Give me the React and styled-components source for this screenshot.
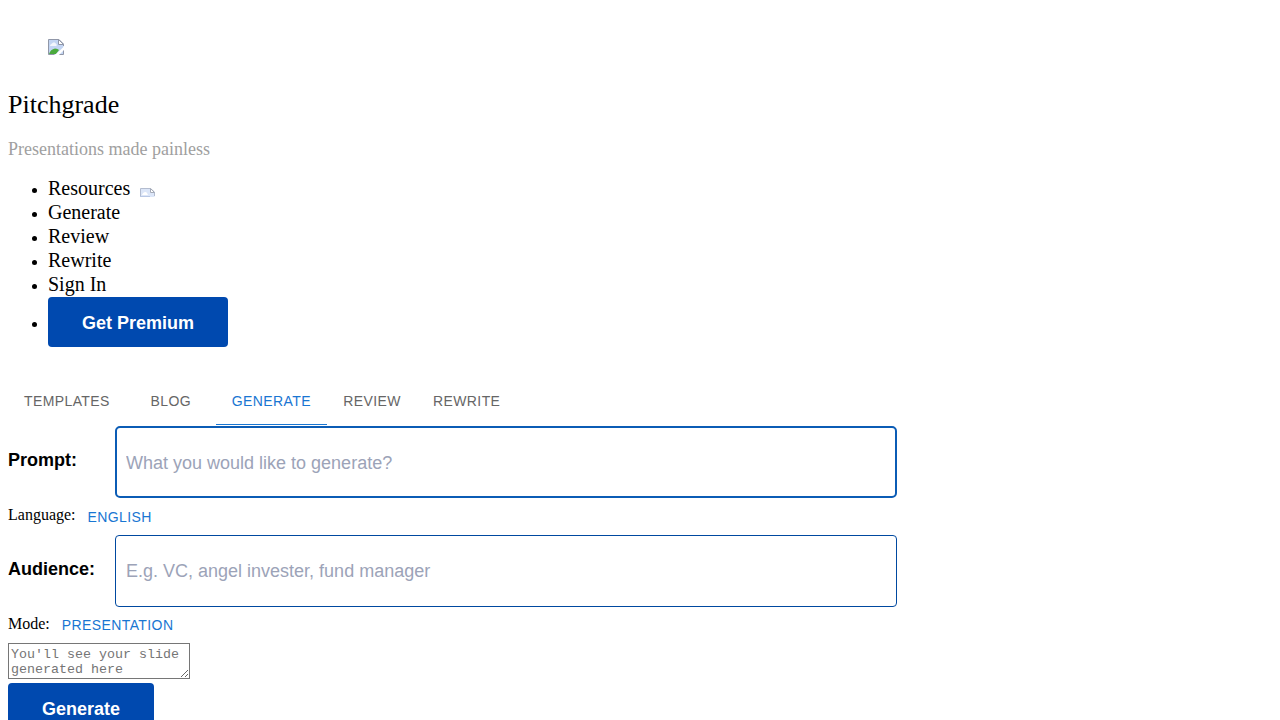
import React from "react";
import styled, { createGlobalStyle, css } from "styled-components";

const serif = '"Liberation Serif", "Times New Roman", serif';
const sans = '"Liberation Sans", Arial, sans-serif';
const mono = '"Liberation Mono", "Courier New", monospace';

const GlobalStyle = createGlobalStyle`
  html {
    scrollbar-width: none;
  }
  body {
    margin: 8px;
    background: #fff;
    color: #000;
    font-family: ${serif};
    font-size: 16px;
  }
`;

const Figure = styled.figure`
  display: flex;
  margin: 0 40px;
  padding: 31px 0 32px;
`;

const Title = styled.p`
  margin: 0;
  font-size: 26px;
  line-height: 36px;
`;

const Subtitle = styled.p`
  margin: 14px 0 16px;
  color: #a0a0a0;
  font-size: 18px;
  line-height: 24px;
`;

const Menu = styled.ul`
  margin: 0;
  padding-left: 40px;
  list-style: disc;
`;

const MenuItem = styled.li`
  padding-top: ${(p) => (p.$flush ? "0" : "1px")};
  line-height: 23px;
`;

const MenuLink = styled.a`
  color: inherit;
  font-size: 20px;
  line-height: 20px;
  text-decoration: none;
`;

const ArrowIcon = styled.svg`
  margin-left: 10px;
  vertical-align: -2px;
`;

const PrimaryButton = styled.button`
  display: block;
  height: 50px;
  padding: 2px 34px 0;
  border: 0;
  border-radius: 4px;
  background: #0049af;
  color: #fff;
  font: bold 18px ${sans};
  cursor: pointer;
`;

const Tabs = styled.nav`
  display: flex;
  margin: 30px 0 1px;
`;

const Tab = styled.a`
  box-sizing: border-box;
  min-width: 90px;
  height: 48px;
  padding: 0 16px;
  border-bottom: 1px solid ${(p) => (p.$active ? "#1976d2" : "transparent")};
  color: ${(p) => (p.$active ? "#1976d2" : "#666")};
  font: 14px/48px ${sans};
  letter-spacing: 0.02857em;
  text-align: center;
  text-decoration: none;
  text-transform: uppercase;
`;

const Field = styled.div`
  display: flex;
  align-items: center;
`;

const FieldLabel = styled.label`
  flex: 0 0 107px;
  padding-bottom: 4px;
  font: bold 18px/24px ${sans};
`;

const TextInput = styled.input`
  box-sizing: border-box;
  flex: 0 1 782px;
  min-width: 0;
  height: 72px;
  padding: 0 10px;
  border: 1px solid #0049a0;
  border-radius: 4px;
  outline: 0;
  background: #fff;
  font: 18px ${sans};
  ${(p) =>
    p.$current &&
    css`
      padding: 2px 9px 0;
      border: 2px solid #0b5cb5;
      border-radius: 5px;
    `}
  &::placeholder {
    color: #9ca3b8;
    opacity: 1;
  }
`;

const Choice = styled.div`
  display: flex;
  align-items: center;
  height: ${(p) => (p.$compact ? "36px" : "37px")};
`;

const ChoiceLabel = styled.label`
  padding-right: 4px;
  padding-bottom: 3px;
`;

const ChoiceButton = styled.button`
  min-width: 64px;
  padding: 0 8px;
  border: 0;
  background: transparent;
  color: #1976d2;
  font: 14px/24px ${sans};
  letter-spacing: 0.02857em;
  text-transform: uppercase;
  cursor: pointer;
`;

const Output = styled.textarea`
  display: block;
  box-sizing: border-box;
  width: 182px;
  height: 36px;
  margin: 0 0 4px;
  padding: 3px 2px 1px;
  border: 1px solid #767676;
  font-family: ${mono};
  line-height: 15px;
  overflow: hidden;
  &::placeholder {
    color: #757575;
  }
`;

function ImageGlyph() {
  return (
    <svg width="16" height="16" viewBox="0 0 16 16" role="img" aria-label="Logo">
      <path d="M0.5 0.5H11L15.5 5V15.5H0.5Z" fill="#c3d5f3" />
      <path d="M2 7C2 5 4 5 4.500 4C6 3 8 4 8 5C9 5 9 7 8 7Z" fill="#f2f6fd" />
      <path d="M1 15C2 12 4 10 7 9.500C9 9.500 10 10.500 11 11L8 15Z" fill="#4aaa3c" />
      <path d="M7 16L16 7.500V11L11 16Z" fill="#fff" />
      <path d="M6.500 15.500H0.500V0.500H11L15.500 5V7M11.500 15.500H15.500V11.500" fill="none" stroke="#9097a8" />
      <path d="M10.500 0.500V5.500H15.500Z" fill="#fff" stroke="#9097a8" />
    </svg>
  );
}

function CaretGlyph() {
  return (
    <ArrowIcon width="15" height="9" viewBox="0 0 15 9" role="img" aria-label="Expand">
      <path d="M0.5 9V0.5H10.500L14.500 4V9Z" fill="#dce6f8" />
      <path d="M2 7C3 4 6 3 7 5L8 7Z" fill="#fff" />
      <path d="M0.500 9V0.500H10.500L14.500 4V8" fill="none" stroke="#b3bccf" />
      <path d="M10.500 0.500V4.500H14.500Z" fill="#fff" stroke="#a5abb8" />
      <path d="M0 8.500H10" stroke="#b9c8e5" />
    </ArrowIcon>
  );
}

const menu = ["Resources", "Generate", "Review", "Rewrite", "Sign In"];
const tabs = ["Templates", "Blog", "Generate", "Review", "Rewrite"];

export default function App() {
  return (
    <>
      <GlobalStyle />
      <header>
        <Figure>
          <ImageGlyph />
        </Figure>
        <Title>Pitchgrade</Title>
        <Subtitle>Presentations made painless</Subtitle>
        <Menu>
          {menu.map((name) => (
            <MenuItem key={name}>
              <MenuLink href="#">{name}</MenuLink>
              {name === "Resources" && <CaretGlyph />}
            </MenuItem>
          ))}
          <MenuItem $flush>
            <PrimaryButton type="button">Get Premium</PrimaryButton>
          </MenuItem>
        </Menu>
      </header>
      <Tabs>
        {tabs.map((name) => (
          <Tab key={name} href="#" $active={name === "Generate"}>
            {name}
          </Tab>
        ))}
      </Tabs>
      <main>
        <Field>
          <FieldLabel htmlFor="prompt">Prompt:</FieldLabel>
          <TextInput id="prompt" $current placeholder="What you would like to generate?" />
        </Field>
        <Choice>
          <ChoiceLabel htmlFor="language">Language:</ChoiceLabel>
          <ChoiceButton id="language" type="button">English</ChoiceButton>
        </Choice>
        <Field>
          <FieldLabel htmlFor="audience">Audience:</FieldLabel>
          <TextInput id="audience" placeholder="E.g. VC, angel invester, fund manager" />
        </Field>
        <Choice $compact>
          <ChoiceLabel htmlFor="mode">Mode:</ChoiceLabel>
          <ChoiceButton id="mode" type="button">Presentation</ChoiceButton>
        </Choice>
        <Output aria-label="Generated slide" placeholder="You'll see your slide generated here" />
        <PrimaryButton type="button">Generate</PrimaryButton>
      </main>
    </>
  );
}
